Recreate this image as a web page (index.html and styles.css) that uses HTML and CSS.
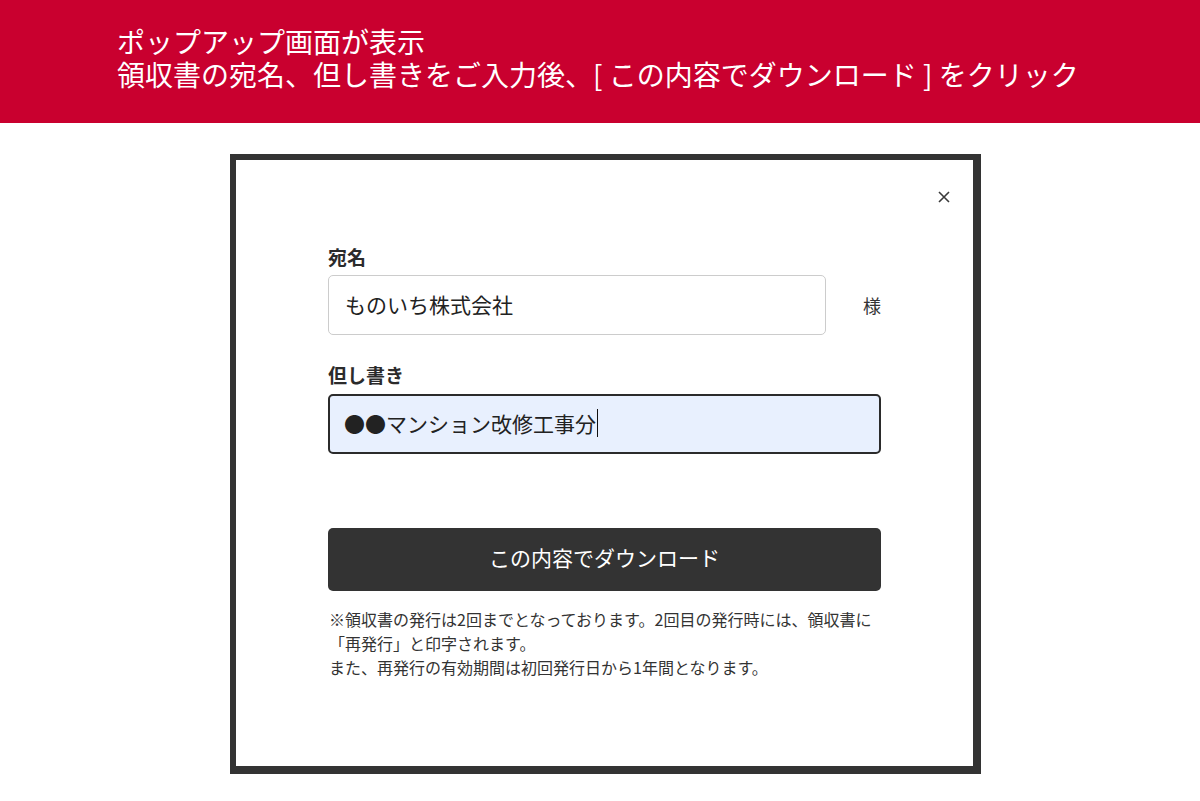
FILE: index.html
```html
<!DOCTYPE html>
<html lang="ja">
<head>
    <meta charset="UTF-8">
    <meta name="viewport" content="width=device-width, initial-scale=1.0">
    <title>領収書ダウンロード</title>
    <link rel="stylesheet" href="styles.css">
</head>
<body>

    <div class="banner">
        <p>ポップアップ画面が表示</p>
        <p>領収書の宛名、但し書きをご入力後、[ この内容でダウンロード ] をクリック</p>
    </div>

    <div class="modal">
        <button class="close-btn" aria-label="閉じる">
            <svg width="12" height="12" viewBox="0 0 12 12">
                <path d="M1 1 L11 11 M11 1 L1 11" stroke="#3a3a3a" stroke-width="1.6" fill="none"/>
            </svg>
        </button>

        <div class="field">
            <div class="field-label">宛名</div>
            <div class="field-row">
                <div class="field-input">ものいち株式会社</div>
                <span class="suffix">様</span>
            </div>
        </div>

        <div class="field field-gap">
            <div class="field-label">但し書き</div>
            <div class="field-input active">●●マンション改修工事分<span class="caret"></span></div>
        </div>

        <button class="download-btn">この内容でダウンロード</button>

        <p class="note">
            ※領収書の発行は2回までとなっております。2回目の発行時には、領収書に<br>
            「再発行」と印字されます。<br>
            また、再発行の有効期間は初回発行日から1年間となります。
        </p>
    </div>

</body>
</html>
```

FILE: styles.css
```css
body {
    margin: 0;
    background-color: #ffffff;
    font-family: "Noto Sans CJK JP", "Noto Sans", sans-serif;
    color: #222;
}

.banner {
    height: 123px;
    box-sizing: border-box;
    padding-top: 25px;
    padding-left: 117px;
    background-color: #c9002f;
    color: #ffffff;
    font-size: 28px;
    line-height: 33px;
}

.banner p {
    margin: 0;
}

.modal {
    position: relative;
    box-sizing: border-box;
    width: 751px;
    height: 620px;
    margin: 31px 0 0 230px;
    padding: 85px 92px 0 92px;
    background-color: #ffffff;
    border-style: solid;
    border-color: #333333;
    border-width: 6px 8px 8px 6px;
}

.close-btn {
    position: absolute;
    top: 31px;
    right: 23px;
    width: 12px;
    height: 12px;
    padding: 0;
    border: none;
    background: none;
    display: flex;
    cursor: pointer;
}

.field-gap {
    margin-top: 28px;
}

.field-label {
    font-size: 19px;
    font-weight: bold;
    line-height: 24px;
    color: #2b2b2b;
    margin-bottom: 6px;
}

.field-row {
    display: flex;
    align-items: center;
}

.field-row .field-input {
    flex: 1;
}

.suffix {
    margin-left: 37px;
    font-size: 18px;
    color: #333;
}

.field-input {
    box-sizing: border-box;
    height: 60px;
    display: flex;
    align-items: center;
    padding-left: 16px;
    padding-bottom: 2px;
    border: 1px solid #cccccc;
    border-radius: 5px;
    font-size: 21px;
    color: #222;
}

.field-input.active {
    margin-top: 7px;
    padding-left: 14px;
    border: 2px solid #2b2b2b;
    background-color: #e8f0fe;
}

.caret {
    display: inline-block;
    width: 1px;
    height: 28px;
    margin-left: 1px;
    background-color: #111;
}

.download-btn {
    display: block;
    width: 100%;
    height: 63px;
    margin-top: 74px;
    padding: 0 0 5px 0;
    border: none;
    border-radius: 5px;
    background-color: #333333;
    color: #ffffff;
    font-family: inherit;
    font-size: 21px;
    cursor: pointer;
}

.note {
    margin: 16px 0 0 1px;
    font-size: 16px;
    line-height: 24px;
    color: #333;
}
```
